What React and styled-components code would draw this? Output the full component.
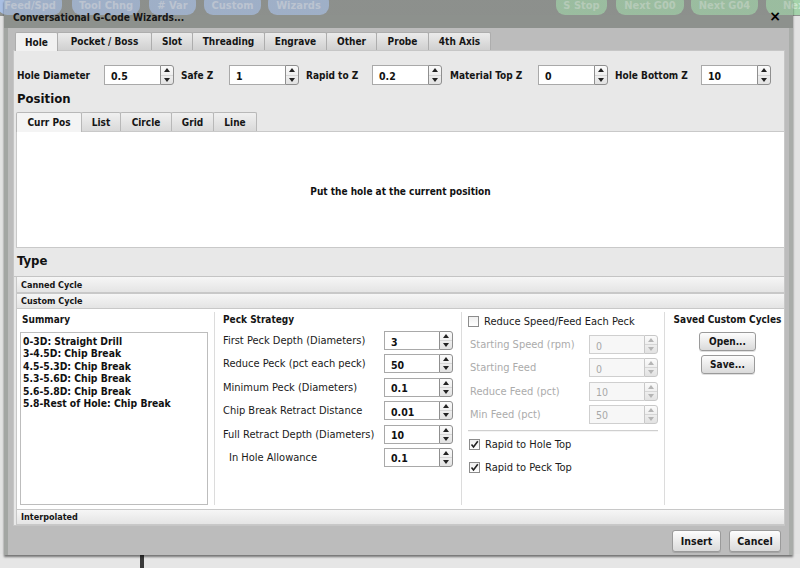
import React from 'react';
import styled, { createGlobalStyle } from 'styled-components';

const FONT = `"DejaVu Sans Condensed", "DejaVu Sans", Tahoma, sans-serif`;

const Global = createGlobalStyle`
  html, body { margin: 0; padding: 0; }
  body { font-family: ${FONT}; font-size: 11px; color: #111; background: #dedede; }
  * { box-sizing: border-box; }
`;

const Screen = styled.div`
  position: relative;
  width: 800px;
  height: 568px;
  overflow: hidden;
  background: #e3e3e3;
`;

const AppBar = styled.div`
  display: flex;
  align-items: flex-end;
  height: 16px;
  background: #8f928f;
  overflow: hidden;
`;

const Pill = styled.div`
  flex: none;
  width: ${(p) => p.$w}px;
  margin-left: ${(p) => p.$ml || 0}px;
  height: 22px;
  margin-bottom: 1px;
  border-radius: 9px;
  background: ${(p) => (p.$green ? '#a3d2aa' : '#a9bfe3')};
  color: ${(p) => (p.$green ? '#c9e6cd' : '#d2dcf0')};
  font-weight: bold;
  font-size: 11px;
  white-space: nowrap;
  display: flex;
  align-items: flex-end;
  justify-content: center;
  padding-bottom: 3px;
`;

const AppLower = styled.div`
  position: absolute;
  left: 0;
  right: 0;
  bottom: 0;
  height: 14px;
  display: flex;
  background: #e6e6e6;
`;

const Post = styled.div`
  margin-left: 140px;
  width: 4px;
  background: #3a3a3a;
`;

const Dialog = styled.div`
  position: absolute;
  left: 4px;
  top: 0;
  width: 789px;
  height: 555px;
  display: flex;
  flex-direction: column;
  box-shadow: 0 2px 2px rgba(0, 0, 0, 0.5);
`;

const TitleBar = styled.div`
  height: 28px;
  flex: none;
  display: flex;
  justify-content: space-between;
  align-items: flex-start;
  padding: 12px 12px 0 9px;
  background: linear-gradient(rgba(135, 139, 135, 0.3) 0, rgba(135, 139, 135, 0.3) 15px, #8d918d 15px);
`;

const Title = styled.div`
  font-weight: bold;
  font-size: 10.1px;
  line-height: 12px;
  color: #161616;
`;

const Close = styled.div`
  font-weight: bold;
  font-size: 14px;
  line-height: 10px;
  margin-top: -1px;
  color: #000;
  font-family: "DejaVu Sans", sans-serif;
`;

const Body = styled.div`
  flex: 1;
  display: flex;
  flex-direction: column;
  padding: 4px 4px 0 5px;
  background: #bcbcbc;
  border-left: 4px solid #a3a6a3;
  border-right: 4px solid #a9aca9;
`;

const TabRow = styled.div`
  display: flex;
  padding-left: 3px;
  height: 18px;
  flex: none;
`;

const Tab = styled.div`
  width: ${(p) => p.$w}px;
  flex: none;
  height: ${(p) => (p.$active ? 19 : 18)}px;
  display: flex;
  align-items: center;
  justify-content: center;
  font-weight: bold;
  font-size: 10px;
  white-space: nowrap;
  border: 1px solid #adadad;
  border-bottom: none;
  margin-left: -1px;
  border-radius: 2px 2px 0 0;
  background: ${(p) => (p.$active ? '#f1f1f1' : 'linear-gradient(#ebebeb, #d0d0d0)')};
  position: relative;
  z-index: ${(p) => (p.$active ? 2 : 1)};
  color: #151515;
`;

const Panel = styled.div`
  height: 476px;
  flex: none;
  background: #e8e8e8;
  border: 1px solid #c6c6c6;
  display: flex;
  flex-direction: column;
  padding: 0 0 0 1px;
`;

const FieldRow = styled.div`
  display: flex;
  align-items: center;
  margin-top: 14px;
  padding-left: 2px;
  height: 20px;
`;

const FieldGroup = styled.div`
  display: flex;
  align-items: center;
  margin-right: ${(p) => p.$mr}px;
`;

const FieldLabel = styled.div`
  font-weight: bold;
  font-size: 10px;
  white-space: nowrap;
  width: ${(p) => p.$w}px;
  color: #151515;
`;

const SpinWrap = styled.div`
  display: flex;
  height: ${(p) => p.$h || 20}px;
`;

const SpinInput = styled.div`
  width: ${(p) => p.$w || 56}px;
  height: 100%;
  background: ${(p) => (p.$disabled ? '#f7f7f7' : '#fff')};
  border: 1px solid ${(p) => (p.$disabled ? '#cfcfcf' : '#a9a9a9')};
  border-right: none;
  display: flex;
  align-items: center;
  padding-left: 6px;
  padding-top: 2px;
  font-weight: ${(p) => (p.$disabled ? 'normal' : 'bold')};
  color: ${(p) => (p.$disabled ? '#a8a8a8' : '#111')};
  font-size: 10.5px;
`;

const SpinBtns = styled.div`
  width: 14px;
  height: 100%;
  border: 1px solid ${(p) => (p.$disabled ? '#c8c8c8' : '#8f8f8f')};
  border-radius: 0 3px 3px 0;
  display: flex;
  flex-direction: column;
  background: linear-gradient(#fbfbfb, #e2e2e2);
`;

const SpinHalf = styled.div`
  flex: 1;
  display: flex;
  align-items: center;
  justify-content: center;
  & + & {
    border-top: 1px solid ${(p) => (p.$disabled ? '#d6d6d6' : '#a8a8a8')};
  }
`;

const Arrow = ({ up, disabled }) => (
  <svg width="6" height="4" viewBox="0 0 6 4">
    <path d={up ? 'M0 4 L3 0 L6 4 Z' : 'M0 0 L6 0 L3 4 Z'} fill={disabled ? '#b5b5b5' : '#222'} />
  </svg>
);

const Spinner = ({ value, w, h, disabled }) => (
  <SpinWrap $h={h}>
    <SpinInput $w={w} $disabled={disabled}>{value}</SpinInput>
    <SpinBtns $disabled={disabled}>
      <SpinHalf $disabled={disabled}><Arrow up disabled={disabled} /></SpinHalf>
      <SpinHalf $disabled={disabled}><Arrow disabled={disabled} /></SpinHalf>
    </SpinBtns>
  </SpinWrap>
);

const Heading = styled.div`
  font-weight: bold;
  font-size: 13px;
  line-height: 17px;
  padding-left: 2px;
  margin-top: ${(p) => p.$mt}px;
  height: ${(p) => p.$h}px;
  color: #111;
`;

const SubTabRow = styled.div`
  display: flex;
  padding-left: 2px;
  height: 19px;
  margin-top: 4px;
  flex: none;
`;

const SubTab = styled(Tab)`
  height: ${(p) => (p.$active ? 20 : 19)}px;
  background: ${(p) => (p.$active ? '#f4f4f4' : 'linear-gradient(#f0f0f0, #d9d9d9)')};
  border-color: #b8b8b8;
`;

const SubPanel = styled.div`
  margin: 0 0 0 1px;
  width: 769px;
  height: 117px;
  background: #fff;
  border: 1px solid #c9c9c9;
  display: flex;
  align-items: center;
  justify-content: center;
  font-weight: bold;
  font-size: 10px;
  padding-top: 4px;
`;

const TypeBar = styled.div`
  border-bottom: 1px solid #c4c4c4;
  height: 29px;
  margin: 0 0 0 -1px;
  padding-left: 3px;
  padding-top: 5px;
  font-weight: bold;
  font-size: 13px;
`;

const AccHeader = styled.div`
  height: 16px;
  flex: none;
  display: flex;
  align-items: center;
  padding-left: 4px;
  font-weight: bold;
  font-size: 9px;
  background: linear-gradient(#f6f6f6, #e4e4e4);
  border: 1px solid #c8c8c8;
  border-top: ${(p) => (p.$first ? 'none' : '1px solid #c8c8c8')};
  margin: 0 0 0 1px;
  width: 769px;
  color: #151515;
`;

const AccContent = styled.div`
  height: 200px;
  flex: none;
  background: #fff;
  width: 769px;
  margin-left: 1px;
  border-left: 1px solid #c8c8c8;
  border-right: 1px solid #c8c8c8;
  display: grid;
  grid-template-columns: 197px 247px 203px 1fr;
  padding: 3px 0 4px;
`;

const Col = styled.div`
  border-left: ${(p) => (p.$first ? 'none' : '1px solid #dcdcdc')};
  padding: ${(p) => p.$pad};
  display: flex;
  flex-direction: column;
  align-items: ${(p) => p.$align || 'stretch'};
`;

const ColTitle = styled.div`
  font-weight: bold;
  font-size: 10px;
  line-height: 14px;
  white-space: nowrap;
  height: ${(p) => p.$h || 17}px;
  padding-top: 1px;
  color: #151515;
`;

const SummaryBox = styled.div`
  border: 1px solid #bdbdbd;
  height: 173px;
  margin-top: 3px;
  margin-right: 6px;
  padding: 2px 2px;
  font-weight: bold;
  font-size: 10.3px;
  line-height: 12.4px;
  white-space: nowrap;
`;

const FormGrid = styled.div`
  display: grid;
  grid-template-columns: ${(p) => p.$cols};
  grid-auto-rows: ${(p) => p.$rh}px;
  row-gap: ${(p) => p.$gap}px;
  align-items: center;
  margin-top: ${(p) => p.$mt || 0}px;
`;

const RowLabel = styled.div`
  font-size: 11px;
  white-space: nowrap;
  color: ${(p) => (p.$disabled ? '#ababab' : '#1a1a1a')};
  padding-left: ${(p) => p.$indent || 0}px;
`;

const CheckRow = styled.div`
  display: flex;
  align-items: center;
  height: ${(p) => p.$h || 23}px;
  font-size: 11px;
  color: #1a1a1a;
`;

const Box = styled.div`
  width: 11px;
  height: 11px;
  border: 1px solid #8c8c8c;
  background: linear-gradient(#f0f0f0, #fff);
  margin-right: 5px;
  margin-left: ${(p) => p.$ml || 0}px;
  display: flex;
  align-items: center;
  justify-content: center;
`;

const Check = ({ checked }) => (
  <Box $ml={1}>
    {checked && (
      <svg width="9" height="9" viewBox="0 0 9 9">
        <path d="M1.5 4.5 L3.5 7 L7.8 1.2" stroke="#222" strokeWidth="1.6" fill="none" />
      </svg>
    )}
  </Box>
);

const Separator = styled.div`
  height: 2px;
  flex: none;
  border-top: 1px solid #cfcfcf;
  border-bottom: 1px solid #f4f4f4;
  margin: 6px 6px 1px 0;
`;

const Button = styled.div`
  width: ${(p) => p.$w}px;
  height: ${(p) => p.$h || 19}px;
  margin-top: ${(p) => p.$mt || 0}px;
  margin-left: ${(p) => p.$ml || 0}px;
  display: flex;
  align-items: center;
  justify-content: center;
  border: 1px solid #9a9a9a;
  border-radius: 3px;
  background: linear-gradient(#fdfdfd, #dadada);
  font-weight: bold;
  font-size: ${(p) => p.$fs || 10}px;
  color: #151515;
  box-shadow: 0 1px 0 rgba(0, 0, 0, 0.12);
`;

const Footer = styled.div`
  display: flex;
  justify-content: flex-end;
  padding: 4px 4px 0 0;
  gap: 8px;
`;

const tabs = [
  ['Hole', 43],
  ['Pocket / Boss', 95],
  ['Slot', 42],
  ['Threading', 73],
  ['Engrave', 63],
  ['Other', 51],
  ['Probe', 53],
  ['4th Axis', 63],
];

const subTabs = [
  ['Curr Pos', 66],
  ['List', 40],
  ['Circle', 52],
  ['Grid', 43],
  ['Line', 44],
];

const fields = [
  ['Hole Diameter', '0.5', 87, 7],
  ['Safe Z', '1', 48, 7],
  ['Rapid to Z', '0.2', 66, 8],
  ['Material Top Z', '0', 88, 7],
  ['Hole Bottom Z', '10', 86, 0],
];

const summary = [
  '0-3D: Straight Drill',
  '3-4.5D: Chip Break',
  '4.5-5.3D: Chip Break',
  '5.3-5.6D: Chip Break',
  '5.6-5.8D: Chip Break',
  '5.8-Rest of Hole: Chip Break',
];

const peck = [
  ['First Peck Depth (Diameters)', '3'],
  ['Reduce Peck (pct each peck)', '50'],
  ['Minimum Peck (Diameters)', '0.1'],
  ['Chip Break Retract Distance', '0.01'],
  ['Full Retract Depth (Diameters)', '10'],
  ['In Hole Allowance', '0.1', 6],
];

const reduce = [
  ['Starting Speed (rpm)', '0'],
  ['Starting Feed', '0'],
  ['Reduce Feed (pct)', '10'],
  ['Min Feed (pct)', '50'],
];

export default function App() {
  return (
    <Screen>
      <Global />
      <AppBar>
        <Pill $w={64} $ml={-2}>Feed/Spd</Pill>
        <Pill $w={68} $ml={10}>Tool Chng</Pill>
        <Pill $w={47} $ml={9}># Var</Pill>
        <Pill $w={57} $ml={8}>Custom</Pill>
        <Pill $w={61} $ml={7}>Wizards</Pill>
        <Pill $w={51} $ml={227} $green>S Stop</Pill>
        <Pill $w={68} $ml={9} $green>Next G00</Pill>
        <Pill $w={67} $ml={7} $green>Next G04</Pill>
        <Pill $w={60} $ml={8} $green>Next</Pill>
      </AppBar>
      <AppLower>
        <Post />
      </AppLower>
      <Dialog>
        <TitleBar>
          <Title>Conversational G-Code Wizards...</Title>
          <Close>×</Close>
        </TitleBar>
        <Body>
          <TabRow>
            {tabs.map(([t, w], i) => (
              <Tab key={t} $w={w} $active={i === 0}>{t}</Tab>
            ))}
          </TabRow>
          <Panel>
            <FieldRow>
              {fields.map(([label, v, lw, mr]) => (
                <FieldGroup key={label} $mr={mr}>
                  <FieldLabel $w={lw}>{label}</FieldLabel>
                  <Spinner value={v} />
                </FieldGroup>
              ))}
            </FieldRow>
            <Heading $mt={5} $h={18}>Position</Heading>
            <SubTabRow>
              {subTabs.map(([t, w], i) => (
                <SubTab key={t} $w={w} $active={i === 0}>{t}</SubTab>
              ))}
            </SubTabRow>
            <SubPanel>Put the hole at the current position</SubPanel>
            <TypeBar>Type</TypeBar>
            <AccHeader $first>Canned Cycle</AccHeader>
            <AccHeader>Custom Cycle</AccHeader>
            <AccContent>
              <Col $first $pad="0 0 0 3px">
                <ColTitle style={{ paddingLeft: 2 }}>Summary</ColTitle>
                <SummaryBox>
                  {summary.map((s) => (
                    <div key={s}>{s}</div>
                  ))}
                </SummaryBox>
              </Col>
              <Col $pad="0 0 0 8px">
                <ColTitle $h={17}>Peck Strategy</ColTitle>
                <FormGrid $cols="161px auto" $rh={19} $gap={4.4} $mt={2}>
                  {peck.map(([l, v, ind]) => (
                    <React.Fragment key={l}>
                      <RowLabel $indent={ind}>{l}</RowLabel>
                      <Spinner value={v} w={55} h={19} />
                    </React.Fragment>
                  ))}
                </FormGrid>
              </Col>
              <Col $pad="0 0 0 6px">
                <CheckRow $h={18}>
                  <Box />
                  Reduce Speed/Feed Each Peck
                </CheckRow>
                <FormGrid $cols="121px auto" $rh={19} $gap={4.3} $mt={5}>
                  {reduce.map(([l, v]) => (
                    <RowPair key={l} label={l} value={v} />
                  ))}
                </FormGrid>
                <Separator />
                <CheckRow $h={23}>
                  <Check checked />
                  Rapid to Hole Top
                </CheckRow>
                <CheckRow $h={23}>
                  <Check checked />
                  Rapid to Peck Top
                </CheckRow>
              </Col>
              <Col $pad="0 0 0 6px" $align="center">
                <ColTitle $h={20}>Saved Custom Cycles</ColTitle>
                <Button $w={57}>Open...</Button>
                <Button $w={54} $mt={4}>Save...</Button>
              </Col>
            </AccContent>
            <AccHeader>Interpolated</AccHeader>
          </Panel>
          <Footer>
            <Button $w={49} $h={22} $fs={10.5}>Insert</Button>
            <Button $w={52} $h={22} $fs={10.5}>Cancel</Button>
          </Footer>
        </Body>
      </Dialog>
    </Screen>
  );
}

function RowPair({ label, value }) {
  return (
    <>
      <RowLabel $disabled $indent={2}>{label}</RowLabel>
      <Spinner value={value} w={55} h={19} disabled />
    </>
  );
}
